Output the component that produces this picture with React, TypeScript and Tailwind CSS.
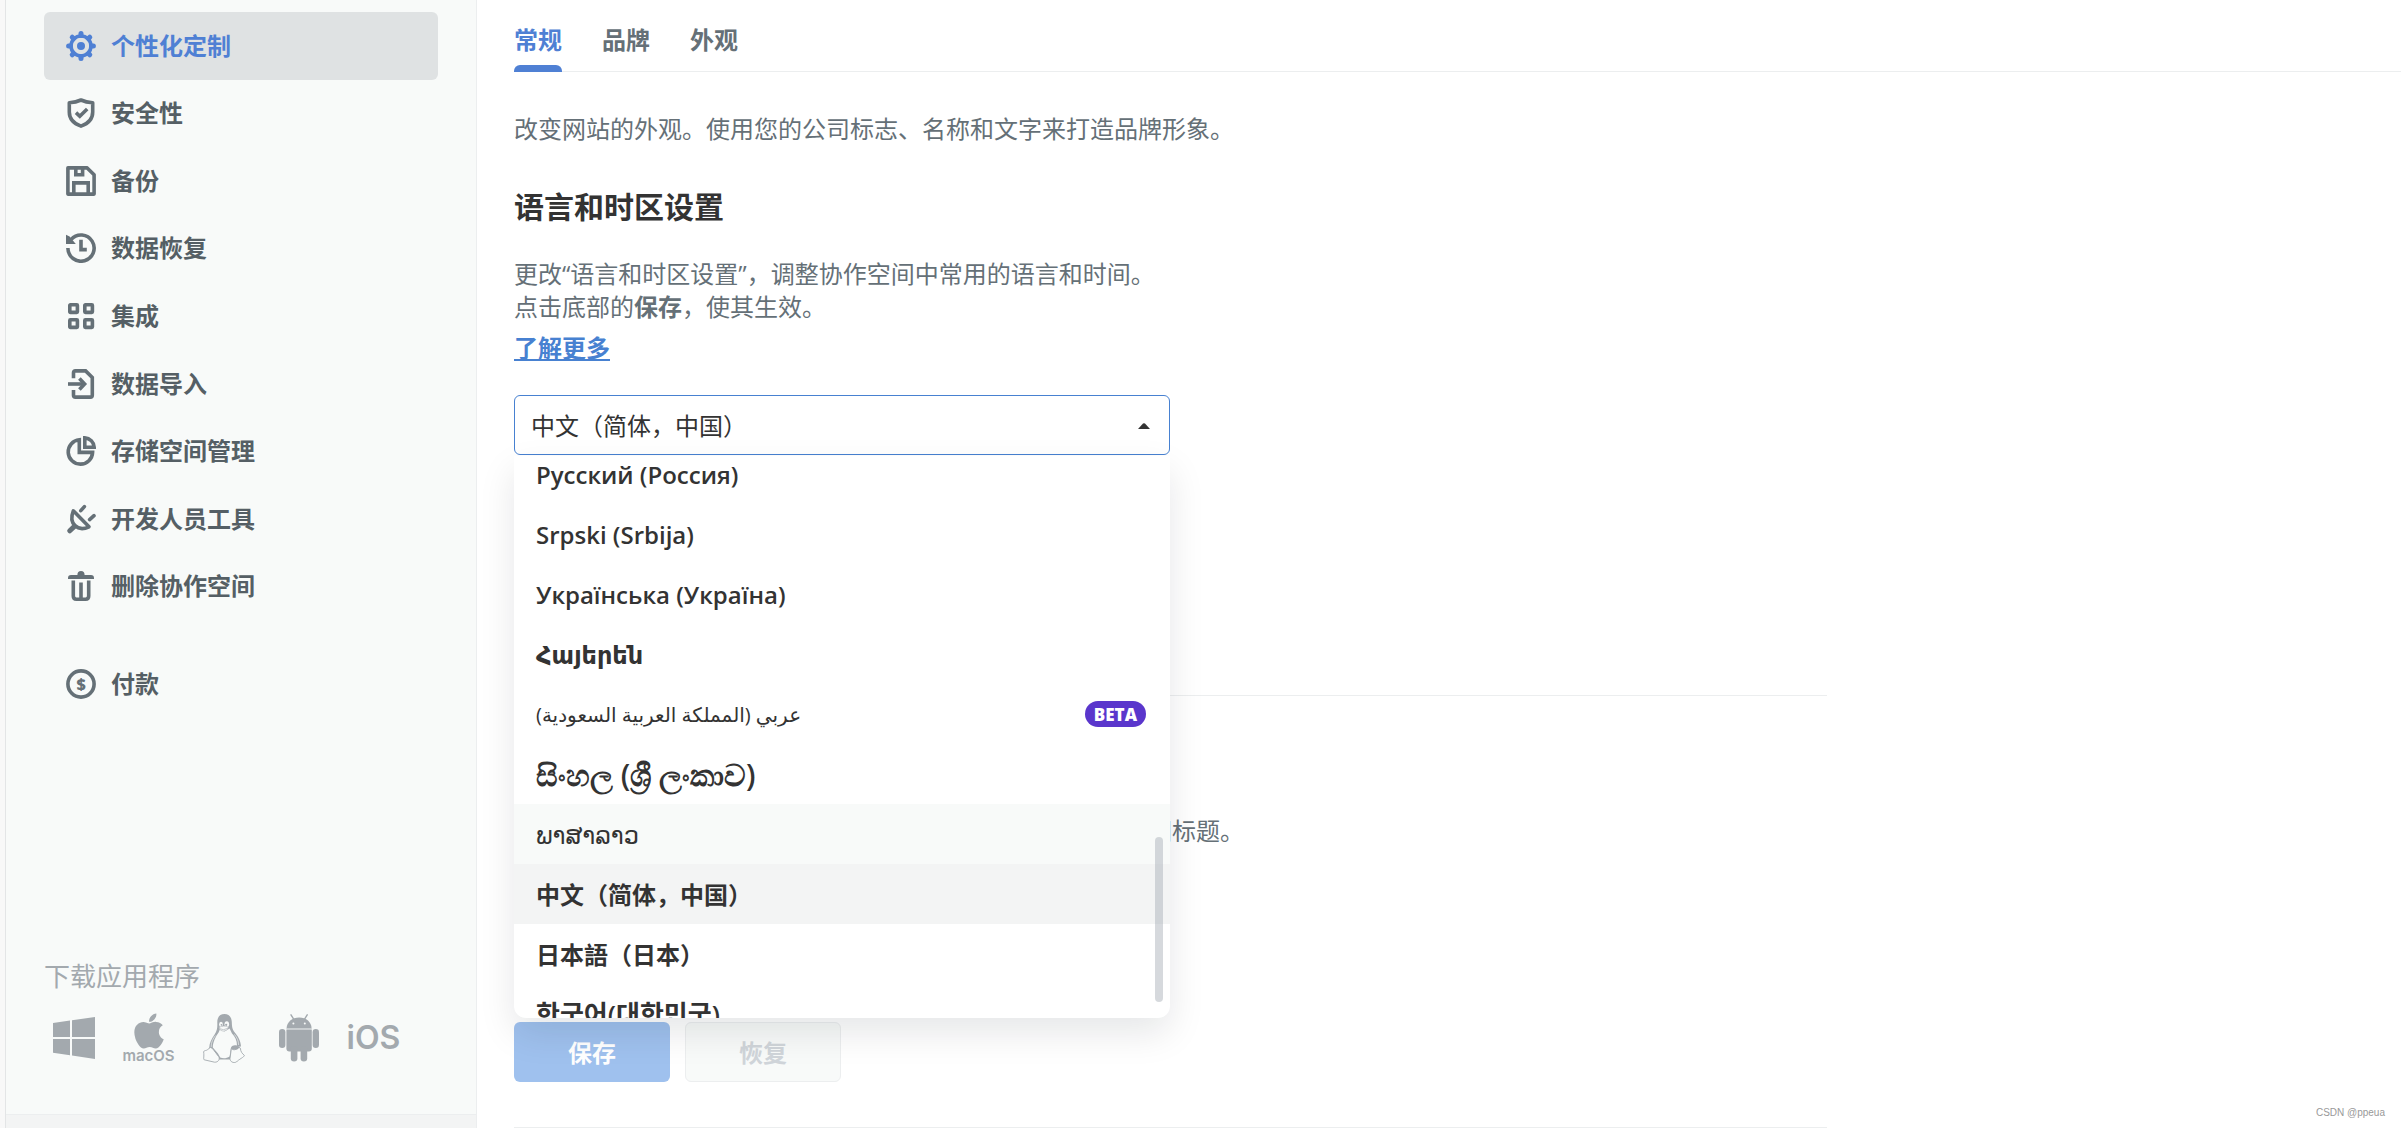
import { useState, type ReactNode } from "react";
import { FaApple } from "react-icons/fa";
import clsx from "clsx";

const FONT = "font-['Open_Sans','Noto_Sans_CJK_SC','DejaVu_Sans',sans-serif]";

const GEAR_ANGLES = [0, 45, 90, 135, 180, 225, 270, 315];

type MenuItem = { label: string; icon: ReactNode };

const MENU: MenuItem[] = [
  {
    label: "个性化定制",
    icon: (
      <>
        <circle cx="15" cy="15" r="10" />
        <circle cx="15" cy="15" r="4" fill="currentColor" stroke="none" />
        {GEAR_ANGLES.map((a) => (
          <path key={a} d="M15 4.5V2.6" strokeWidth="5" strokeLinecap="round" transform={`rotate(${a} 15 15)`} />
        ))}
      </>
    ),
  },
  {
    label: "安全性",
    icon: (
      <>
        <path d="M15 2C11.2 3.8 7.2 4.5 3.3 4.7V14C3.3 20.5 7.8 25.6 15 28.1C22.2 25.6 26.7 20.5 26.7 14V4.7C22.8 4.5 18.8 3.8 15 2Z" strokeLinejoin="round" />
        <path d="M10 14.6L13.8 18.2L21.2 11" />
      </>
    ),
  },
  {
    label: "备份",
    icon: (
      <>
        <path d="M1.9 1.9H21.2L28.1 8.8V28.1H1.9Z" strokeLinejoin="round" />
        <path d="M9.8 2V8.7H16.6V2" />
        <path d="M7.8 28V16.9H22.2V28" />
      </>
    ),
  },
  {
    label: "数据恢复",
    icon: (
      <>
        <path d="M1.9 15A13.1 13.1 0 1 0 5.2 6.4" />
        <path d="M0 1.8L3.6 3.4L9.8 11H0Z" fill="currentColor" stroke="none" />
        <path d="M15 6.8V16.6H20.8" />
      </>
    ),
  },
  {
    label: "集成",
    icon: (
      <>
        <rect x="3.8" y="3.8" width="7.6" height="7.6" rx="0.6" />
        <rect x="18.8" y="3.8" width="7.6" height="7.6" rx="0.6" />
        <rect x="3.8" y="18.8" width="7.6" height="7.6" rx="0.6" />
        <rect x="18.8" y="18.8" width="7.6" height="7.6" rx="0.6" />
      </>
    ),
  },
  {
    label: "数据导入",
    icon: (
      <>
        <path d="M7.5 9.2V3.8Q7.5 1.9 9.4 1.9H19.6L26.3 8.4V26.2Q26.3 28.1 24.4 28.1H9.4Q7.5 28.1 7.5 26.2V21" />
        <path d="M2 15H18" />
        <path d="M13.4 9.5L18.6 15L13.4 20.5" />
      </>
    ),
  },
  {
    label: "存储空间管理",
    icon: (
      <>
        <path d="M13.3 3.8A12.2 12.2 0 1 0 26.6 16.4H13.3Z" />
        <path d="M18.8 1.9A9.8 9.8 0 0 1 28.2 11.3H18.8Z" />
      </>
    ),
  },
  {
    label: "开发人员工具",
    icon: (
      <>
        <path d="M7.3 6.8L23 22.8C17.6 25.4 12.6 25.2 9 21.6C5.4 18 5 12.6 7.3 6.8Z" strokeLinejoin="round" />
        <path d="M8.4 22.4L3.8 26.8" strokeWidth="5" strokeLinecap="round" />
        <path d="M14.8 6.6L18.4 2.6M23.6 15.6L28 11.6" strokeLinecap="round" />
      </>
    ),
  },
  {
    label: "删除协作空间",
    icon: (
      <>
        <path d="M2 8V7Q2 4 5 4H11.4Q11.4 0 15 0Q18.6 0 18.6 4H25Q28 4 28 7V8Z" fill="currentColor" stroke="none" />
        <path d="M7.3 9.5V25Q7.3 28.2 10.4 28.2H19.6Q22.7 28.2 22.7 25V9.5" />
        <path d="M15 11.5V28" />
      </>
    ),
  },
];

const PAYMENT: MenuItem = {
  label: "付款",
  icon: (
    <>
      <circle cx="15" cy="15" r="13.1" />
      <text x="15" y="20.8" textAnchor="middle" fontSize="16" fontWeight="800" fill="currentColor" stroke="none">
        $
      </text>
    </>
  ),
};

const TABS = ["常规", "品牌", "外观"];

const LANGUAGES = [
  { label: "Русский (Россия)" },
  { label: "Srpski (Srbija)" },
  { label: "Українська (Україна)" },
  { label: "Հայերեն" },
  { label: "عربي (المملكة العربية السعودية)", rtl: true, beta: true, style: "text-[20px] font-medium" },
  { label: "සිංහල (ශ්‍රී ලංකාව)", style: "text-[30px] font-semibold" },
  { label: "ພາສາລາວ", hover: true, style: "text-[24px] font-medium" },
  { label: "中文（简体，中国）" },
  { label: "日本語（日本）" },
  { label: "한국어(대한민국)", style: "text-[26px] font-semibold" },
];

function NavLink({ item, active, onClick }: { item: MenuItem; active?: boolean; onClick?: () => void }) {
  return (
    <a
      href="#"
      onClick={onClick}
      className={clsx(
        "flex items-center gap-[15px] rounded-md pl-[22px] text-[24px] font-bold",
        active ? "bg-[#dfe2e3] text-[#4f80d4]" : "text-[#555f65]"
      )}
    >
      <svg
        viewBox="0 0 30 30"
        fill="none"
        stroke="currentColor"
        strokeWidth="3.6"
        className={clsx("h-[30px] w-[30px] shrink-0", !active && "text-[#657077]")}
      >
        {item.icon}
      </svg>
      {item.label}
    </a>
  );
}

function Downloads() {
  const cell = "flex h-[50px] w-[51px] items-center justify-center";
  return (
    <div className="mt-auto px-[38px] pb-[51px] text-[#a3a9ae]">
      <p className="text-[26px] leading-[30px]">下载应用程序</p>
      <div className="mt-[22px] ml-1 flex gap-6">
        <a href="#" aria-label="Windows" className={cell}>
          <svg viewBox="0 0 42 42" className="h-[42px] w-[42px]" fill="currentColor">
            <path d="M0 6L17 3.6V20H0ZM19 3.2L42 0V20H19ZM0 22H17V38.2L0 35.8ZM19 22H42V42L19 38.6Z" />
          </svg>
        </a>
        <a href="#" className="flex h-[50px] w-[51px] flex-col items-center justify-center pb-1">
          <FaApple className="h-10 w-10 shrink-0" />
          <span className="font-[Inter,sans-serif] text-[15px] leading-[10px] font-semibold">macOS</span>
        </a>
        <a href="#" aria-label="Linux" className={cell}>
          <svg viewBox="0 0 42 49" className="h-[49px] w-[42px]">
            {/* body and wings */}
            <path
              fill="currentColor"
              d="M21.5 0C16.5 0 14.2 3.6 14.3 8.4C14.4 13.6 14.4 16 11.6 20.4C8.6 25 6.4 28.6 6.2 34L12 42.5L16 45.5H27L32 33L38 32.5C37.6 26.6 35 22.6 31.8 18.6C29 15 29 12.4 28.8 8C28.6 3.2 26 0 21.5 0Z"
            />
            {/* belly */}
            <path
              fill="#f8faf9"
              d="M17.2 14.8L15.6 18.4C13 22 9.6 28 9.8 33.6L15 39.4L17.2 43.4C20 44.6 23.6 44.4 26.6 42.4L28 33.4C29 31.2 32 30.8 34 31.6C34 26.4 32 22.4 29 19.4L26.6 14.6L21.4 17.6Z"
            />
            <path d="M8.2 33C7.8 28.4 10.4 24.4 12.4 21.6M35.6 31C35.6 26.8 34 23.6 31.4 20.4" stroke="#f8faf9" strokeWidth="0.6" fill="none" />
            {/* eyes and beak */}
            <ellipse cx="18" cy="10.4" rx="1.9" ry="2.6" fill="#f8faf9" />
            <ellipse cx="23.8" cy="10.2" rx="2.3" ry="2.9" fill="#f8faf9" />
            <circle cx="18.5" cy="10.8" r="0.9" fill="currentColor" />
            <circle cx="23.2" cy="10.8" r="1.1" fill="currentColor" />
            <path d="M15.8 13.8Q20.6 10.4 25.6 13.4Q24.4 17 20.4 17.2Q17 17 15.8 13.8Z" fill="#f8faf9" stroke="currentColor" strokeWidth="0.5" />
            <path d="M16.4 14.6Q20.4 17 25 14.2" fill="none" stroke="currentColor" strokeWidth="0.6" />
            {/* feet */}
            <path d="M7.4 33.4C9.6 33.6 12.6 39 15.6 42.4C17.4 45.4 15 48.4 11.6 48.2L1.2 45.8C0 44.6 1.4 42.6 0.6 37.8C1 36.2 3.6 36.8 4.6 35.6Z" fill="#f8faf9" stroke="currentColor" strokeWidth="0.9" />
            <path d="M28.4 34.2C29.6 36.4 33 36.4 35.6 33.2L37.4 34.2C37.6 37.6 39 39.4 41.4 41.4C41.2 43.2 35.6 45.4 33.4 48C30.6 49.4 27 48 27 44.4Z" fill="#f8faf9" stroke="currentColor" strokeWidth="0.9" />
            <path d="M31 33.4Q33.6 30.6 36.6 33.2Q34.6 36.4 31 35.6Z" fill="currentColor" />
          </svg>
        </a>
        <a href="#" aria-label="Android" className={cell}>
          <svg viewBox="0 0 40 48" className="h-[48px] w-[40px]" fill="currentColor">
            <path d="M7.6 14.4C7.8 8.2 13 3.6 20.2 3.6S32.4 8.2 32.6 14.4Z" />
            <path d="M12 0.8L14.8 5.4M28.2 0.8L25.4 5.4" stroke="currentColor" strokeWidth="1.4" strokeLinecap="round" />
            <circle cx="14.4" cy="9.4" r="1" fill="#f8faf9" />
            <circle cx="25.8" cy="9.4" r="1" fill="#f8faf9" />
            <path d="M7.4 16H32.8V34.6Q32.8 37.6 29.8 37.6H10.4Q7.4 37.6 7.4 34.6Z" />
            <path d="M7.5 15.2H32.7" stroke="#c9cdd0" strokeWidth="1.6" />
            <rect x="0" y="15" width="6.4" height="19" rx="3.2" />
            <rect x="33.6" y="15" width="6.4" height="19" rx="3.2" />
            <rect x="11.8" y="32" width="6.6" height="15.6" rx="3.3" />
            <rect x="21.6" y="32" width="6.6" height="15.6" rx="3.3" />
          </svg>
        </a>
        <a href="#" className="flex h-[50px] w-[51px] items-center justify-center font-[Inter,sans-serif] text-[32px] font-semibold">
          iOS
        </a>
      </div>
    </div>
  );
}

function LanguageSelect() {
  const [value, setValue] = useState("中文（简体，中国）");

  return (
    <div className="relative mt-[31px] w-[656px] max-w-full">
      <select
        aria-label="语言"
        value={value}
        onChange={(e) => setValue(e.target.value)}
        className="block h-[60px] w-full appearance-none rounded-md border border-[#4781d1] bg-white px-4 text-[24px] text-[#333]"
      >
        {LANGUAGES.map((l) => (
          <option key={l.label}>{l.label}</option>
        ))}
      </select>
      <svg viewBox="0 0 12 6" className="pointer-events-none absolute top-7 right-5 h-[6px] w-[12px]" fill="#333">
        <path d="M0 6L5 0.6Q6 -0.2 7 0.6L12 6Z" />
      </svg>

      {/* open list, scrolled near its end */}
      <div className="absolute top-[61px] left-0 z-10 h-[562px] w-full overflow-hidden rounded-b-xl bg-white shadow-[0_15px_36px_rgba(4,15,27,0.1)]">
        <ul role="listbox" aria-label="语言" className="-mt-3">
          {LANGUAGES.map((l) => (
            <li
              key={l.label}
              role="option"
              aria-selected={l.label === value}
              onClick={() => setValue(l.label)}
              className={clsx(
                "flex h-[60px] items-center justify-between pr-6 pl-[22px] text-[#333]",
                l.label === value ? "bg-[#f3f4f4]" : l.hover && "bg-[#f8faf9]"
              )}
            >
              <span dir={l.rtl ? "rtl" : "ltr"} className={l.style ?? "text-[24px] font-semibold"}>
                {l.label}
              </span>
              {l.beta && (
                <span className="flex h-[26px] items-center rounded-full bg-[#5a36cc] px-[9px] text-[17px] font-extrabold text-white">
                  BETA
                </span>
              )}
            </li>
          ))}
        </ul>
        <div className="absolute right-[7px] bottom-4 h-[165px] w-2 rounded-full bg-[#a3aab3]/45" />
      </div>
    </div>
  );
}

export default function App() {
  const [page, setPage] = useState(0);
  const [tab, setTab] = useState(0);

  return (
    <div className={clsx("flex min-h-screen bg-white", FONT)}>
      <div className="w-[6px] shrink-0 border-r border-[#e3e5e6] bg-[#f8f8f8]" />

      <aside className="flex w-[471px] shrink-0 flex-col border-r border-[#eceeef] bg-[#f8faf9] pt-3">
        <nav className="px-[38px]">
          <div className="grid h-[608px] auto-rows-fr">
            {MENU.map((item, i) => (
              <NavLink key={item.label} item={item} active={page === i} onClick={() => setPage(i)} />
            ))}
          </div>
          <div className="mt-[30px] grid h-[68px]">
            <NavLink item={PAYMENT} />
          </div>
        </nav>
        <Downloads />
        <div className="h-[14px] border-t border-[#eceeef] bg-[#f3f4f4]" />
      </aside>

      <main className="relative min-w-0 flex-1 pl-[37px] text-[24px] leading-[33px] text-[#657077]">
        <div role="tablist" className="flex gap-10 border-b border-[#eceeef]">
          {TABS.map((t, i) => (
            <button
              key={t}
              role="tab"
              aria-selected={tab === i}
              onClick={() => setTab(i)}
              className={clsx("-mb-px flex flex-col gap-[9px] pt-6 leading-8 font-bold", tab === i && "text-[#4f80d4]")}
            >
              {t}
              <span className={clsx("h-[7px] w-full rounded-t-md", tab === i && "bg-[#4f80d4]")} />
            </button>
          ))}
        </div>

        <div className="max-w-[1313px]">
          <p className="mt-10">改变网站的外观。使用您的公司标志、名称和文字来打造品牌形象。</p>

          <section className="border-b border-[#eceeef] pb-60">
            <h2 className="mt-[42px] text-[30px] leading-10 font-bold text-[#333]">语言和时区设置</h2>
            <p className="mt-[30px]">
              更改“语言和时区设置”，调整协作空间中常用的语言和时间。
              <br />
              点击底部的<b>保存</b>，使其生效。
            </p>
            <a href="#" className="mt-[9px] inline-block leading-8 font-bold text-[#4781d1] underline">
              了解更多
            </a>
            <LanguageSelect />
          </section>

          <section className="border-b border-[#eceeef] pb-[45px]">
            <p className="w-[730px] pt-[118px] text-right">间标题。</p>
            <div className="mt-[175px] flex gap-[15px]">
              <button className="h-[60px] w-[156px] rounded-md bg-[#9fc1ee] font-bold text-white">保存</button>
              <button disabled className="h-[60px] w-[156px] rounded-md border border-[#eceeef] bg-[#f8faf9] font-bold text-[#d0d5da]">
                恢复
              </button>
            </div>
          </section>
        </div>

        <span className="absolute right-4 bottom-2 font-['Liberation_Sans',sans-serif] text-[10px] leading-[14px] text-[#999]">
          CSDN @ppeua
        </span>
      </main>
    </div>
  );
}
